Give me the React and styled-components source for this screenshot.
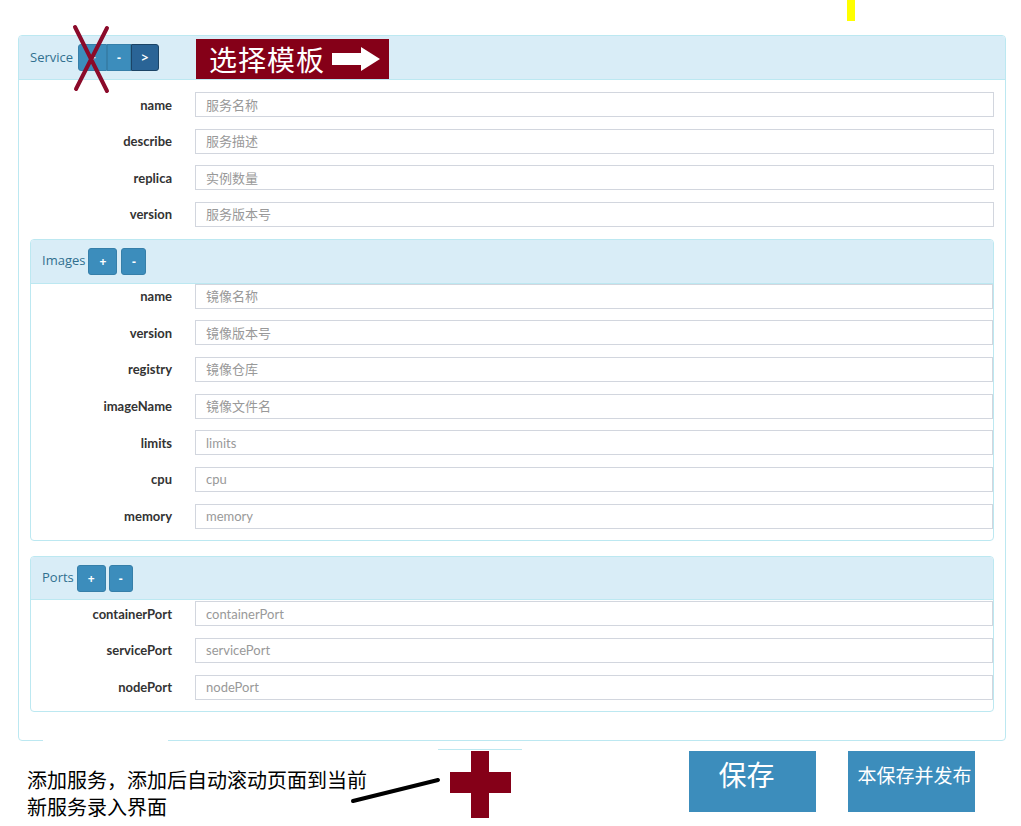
import styled, { createGlobalStyle } from "styled-components";

const GlobalStyle = createGlobalStyle`
  html, body {
    margin: 0;
    padding: 0;
    background: #ffffff;
  }
  body {
    font-family: "Open Sans", "Noto Sans", "Noto Sans CJK SC", sans-serif;
    color: #333333;
  }
  * { box-sizing: border-box; }
`;

// 페이지 전체
const Page = styled.div`
  position: relative;
  width: 1021px;
  height: 826px;
  overflow: hidden;
  padding-top: 35px;
`;

// 상단 노란 표시
const YellowMark = styled.div`
  position: absolute;
  left: 847px;
  top: 0;
  width: 8px;
  height: 21px;
  background: #ffff00;
`;

const Panel = styled.div`
  border: 1px solid #bce8f1;
  border-radius: 4px;
  background: #ffffff;
  margin: ${(p) => p.$margin || "0"};
`;

const PanelHeading = styled.div`
  display: flex;
  align-items: center;
  height: ${(p) => p.$h || 44}px;
  padding-left: 11px;
  background: #d9edf7;
  border-bottom: 1px solid #bce8f1;
  border-radius: 3px 3px 0 0;
`;

const Title = styled.span`
  font-size: 13px;
  color: #31708f;
  margin-right: ${(p) => p.$gap || 4}px;
  margin-top: -2px;
`;

const BtnGroup = styled.div`
  display: flex;
  gap: ${(p) => p.$gap || 0}px;
`;

const Btn = styled.button`
  height: 27px;
  width: ${(p) => p.$w || 28}px;
  padding: 0;
  font-family: "Open Sans", "Noto Sans", sans-serif;
  font-size: 12px;
  font-weight: 700;
  color: #ffffff;
  background: ${(p) => (p.$active ? "#2a6496" : "#3c8dbc")};
  border: 1px solid ${(p) => (p.$active ? "#1b4466" : "#367fa9")};
  border-radius: 3px;
  &:first-child { border-radius: ${(p) => (p.$joined ? "3px 0 0 3px" : "3px")}; }
  &:last-child { border-radius: ${(p) => (p.$joined ? "0 3px 3px 0" : "3px")}; }
  &:not(:first-child):not(:last-child) { border-radius: ${(p) => (p.$joined ? "0" : "3px")}; }
`;

// 모板 선택 표시
const TemplateBadge = styled.div`
  display: flex;
  align-items: center;
  gap: 6px;
  margin-left: 37px;
  margin-top: 2px;
  height: 40px;
  width: 193px;
  padding-left: 13px;
  background: #850018;
  color: #ffffff;
  font-family: "Noto Sans CJK SC", sans-serif;
  font-size: 28px;
  letter-spacing: 1px;
`;

const PanelBody = styled.div`
  display: flex;
  flex-direction: column;
  gap: 11.67px;
  padding: ${(p) => p.$pad || "0"};
`;

const Row = styled.div`
  display: grid;
  grid-template-columns: ${(p) => p.$labelW}px 1fr;
  column-gap: 23px;
  align-items: center;
`;

const Label = styled.label`
  text-align: right;
  font-family: Lato, "Noto Sans", sans-serif;
  font-size: 13px;
  font-weight: 700;
  color: #333333;
`;

const Input = styled.input`
  height: 25px;
  width: 100%;
  padding: 0 10px;
  border: 1px solid #d2d6de;
  font-family: Lato, "Noto Sans CJK SC", sans-serif;
  font-size: 13px;
  outline: none;
  &::placeholder { color: #999999; }
`;

const RedX = styled.svg`
  position: absolute;
  left: 70px;
  top: 24px;
`;

const BorderGap = styled.div`
  position: absolute;
  left: 43px;
  top: 738px;
  width: 125px;
  height: 4px;
  background: #ffffff;
`;

const Footer = styled.div`
  position: relative;
  display: flex;
  align-items: flex-start;
  margin-top: 10px;
  height: 75px;
`;

const Note = styled.div`
  width: 689px;
  padding-left: 27px;
  padding-top: 15px;
  font-family: "Noto Sans CJK SC", sans-serif;
  font-size: 20px;
  line-height: 27px;
  color: #000000;
`;

const BigBtn = styled.div`
  width: 127px;
  height: 61px;
  margin-left: ${(p) => p.$ml || 0}px;
  padding: ${(p) => p.$pad || "0"};
  background: #3c8dbc;
  color: #ffffff;
  font-family: "Noto Sans CJK SC", sans-serif;
  font-size: ${(p) => p.$fs}px;
  text-align: center;
  white-space: nowrap;
`;

const CyanLine = styled.div`
  position: absolute;
  left: 438px;
  top: -2px;
  width: 84px;
  height: 1px;
  background: #bce8f1;
`;

const Annotation = styled.svg`
  position: absolute;
  left: 0;
  top: 0;
  pointer-events: none;
`;

const serviceFields = [
  ["name", "服务名称"],
  ["describe", "服务描述"],
  ["replica", "实例数量"],
  ["version", "服务版本号"],
];

const imageFields = [
  ["name", "镜像名称"],
  ["version", "镜像版本号"],
  ["registry", "镜像仓库"],
  ["imageName", "镜像文件名"],
  ["limits", "limits"],
  ["cpu", "cpu"],
  ["memory", "memory"],
];

const portFields = [
  ["containerPort", "containerPort"],
  ["servicePort", "servicePort"],
  ["nodePort", "nodePort"],
];

const Fields = ({ list, labelW }) =>
  list.map(([name, ph]) => (
    <Row key={name} $labelW={labelW}>
      <Label>{name}</Label>
      <Input placeholder={ph} />
    </Row>
  ));

const App = () => {
  return (
    <Page>
      <GlobalStyle />
      <YellowMark />

      <Panel $margin="0 15px 0 18px">
        <PanelHeading $h={44}>
          <Title $gap={5}>Service</Title>
          <BtnGroup>
            <Btn $joined $w={29}>+</Btn>
            <Btn $joined $w={24}>-</Btn>
            <Btn $joined $active $w={28}>&gt;</Btn>
          </BtnGroup>
          <TemplateBadge>
            选择模板
            <svg width="50" height="26" viewBox="0 0 50 26">
              <path d="M1 7 H30 V1 L49 13 L30 25 V19 H1 Z" fill="#ffffff" />
            </svg>
          </TemplateBadge>
        </PanelHeading>

        <PanelBody $pad="12px 11px 28px 11px">
          <Fields list={serviceFields} labelW={142} />

          <Panel $margin="0">
            <PanelHeading $h={44}>
              <Title $gap={3}>Images</Title>
              <BtnGroup $gap={4}>
                <Btn $w={29}>+</Btn>
                <Btn $w={25}>-</Btn>
              </BtnGroup>
            </PanelHeading>
            <PanelBody $pad="0 0 11px 0">
              <Fields list={imageFields} labelW={141} />
            </PanelBody>
          </Panel>

          <Panel $margin="4px 0 0 0">
            <PanelHeading $h={43}>
              <Title $gap={3}>Ports</Title>
              <BtnGroup $gap={3}>
                <Btn $w={29}>+</Btn>
                <Btn $w={24}>-</Btn>
              </BtnGroup>
            </PanelHeading>
            <PanelBody $pad="1px 0 11px 0">
              <Fields list={portFields} labelW={141} />
            </PanelBody>
          </Panel>
        </PanelBody>
      </Panel>

      <BorderGap />
      <RedX width="42" height="72" viewBox="0 0 42 72">
        <path d="M5 3 L37 67 M37 4 L6 65" stroke="#8b0a2a" strokeWidth="4" strokeLinecap="round" />
      </RedX>

      <Footer>
        <CyanLine />
        <Note>
          添加服务，添加后自动滚动页面到当前
          <br />
          新服务录入界面
        </Note>
        <BigBtn $fs={28} $pad="3px 12px 0 0">保存</BigBtn>
        <BigBtn $fs={19} $ml={32} $pad="10px 0 0 6px">本保存并发布</BigBtn>
        <Annotation width="520" height="75" viewBox="0 0 520 75">
          <path d="M353 50 L438 29" stroke="#000000" strokeWidth="4" strokeLinecap="round" />
          <rect x="471" y="0" width="18" height="67" fill="#850018" />
          <rect x="450" y="21" width="61" height="21" fill="#850018" />
        </Annotation>
      </Footer>
    </Page>
  );
};

export default App;
